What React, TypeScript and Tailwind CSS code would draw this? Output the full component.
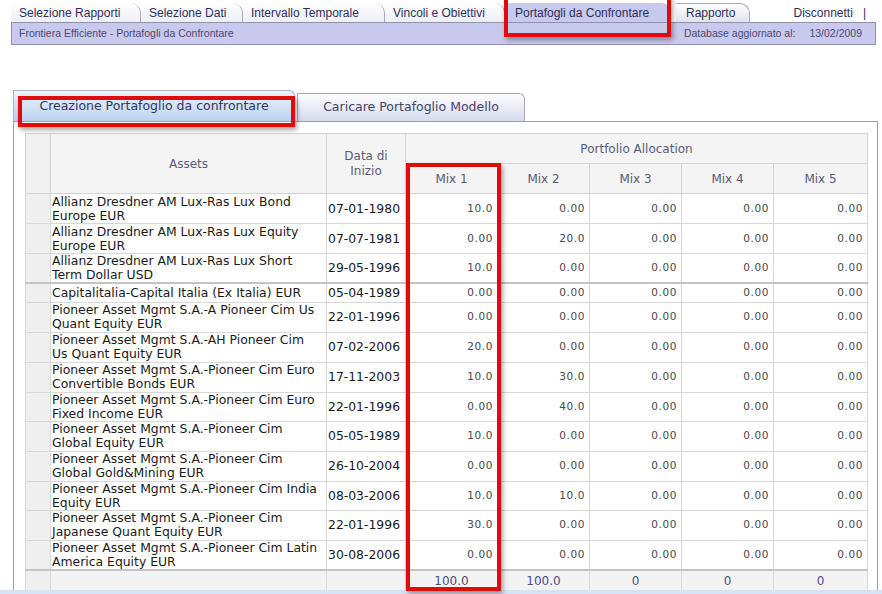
import React from "react";

const navTabs = [
  { label: "Selezione Rapporti", w: "w-[130px]" },
  { label: "Selezione Dati", w: "w-[102px]" },
  { label: "Intervallo Temporale", w: "w-[142px]" },
  { label: "Vincoli e Obiettivi", w: "w-[120px]" },
];

type Row = {
  lines: string[];
  date: string;
  mix: string[];
  h: string;
  sep?: boolean;
};

const rows: Row[] = [
  { lines: ["Allianz Dresdner AM Lux-Ras Lux Bond", "Europe EUR"], date: "07-01-1980", mix: ["10.0", "0.00", "0.00", "0.00", "0.00"], h: "h-[30px]" },
  { lines: ["Allianz Dresdner AM Lux-Ras Lux Equity", "Europe EUR"], date: "07-07-1981", mix: ["0.00", "20.0", "0.00", "0.00", "0.00"], h: "h-[30px]" },
  { lines: ["Allianz Dresdner AM Lux-Ras Lux Short", "Term Dollar USD"], date: "29-05-1996", mix: ["10.0", "0.00", "0.00", "0.00", "0.00"], h: "h-[29px]", sep: true },
  { lines: ["Capitalitalia-Capital Italia (Ex Italia) EUR"], date: "05-04-1989", mix: ["0.00", "0.00", "0.00", "0.00", "0.00"], h: "h-[19px]" },
  { lines: ["Pioneer Asset Mgmt S.A.-A Pioneer Cim Us", "Quant Equity EUR"], date: "22-01-1996", mix: ["0.00", "0.00", "0.00", "0.00", "0.00"], h: "h-[30px]" },
  { lines: ["Pioneer Asset Mgmt S.A.-AH Pioneer Cim", "Us Quant Equity EUR"], date: "07-02-2006", mix: ["20.0", "0.00", "0.00", "0.00", "0.00"], h: "h-[30px]" },
  { lines: ["Pioneer Asset Mgmt S.A.-Pioneer Cim Euro", "Convertible Bonds EUR"], date: "17-11-2003", mix: ["10.0", "30.0", "0.00", "0.00", "0.00"], h: "h-[30px]" },
  { lines: ["Pioneer Asset Mgmt S.A.-Pioneer Cim Euro", "Fixed Income EUR"], date: "22-01-1996", mix: ["0.00", "40.0", "0.00", "0.00", "0.00"], h: "h-[29px]" },
  { lines: ["Pioneer Asset Mgmt S.A.-Pioneer Cim", "Global Equity EUR"], date: "05-05-1989", mix: ["10.0", "0.00", "0.00", "0.00", "0.00"], h: "h-[30px]" },
  { lines: ["Pioneer Asset Mgmt S.A.-Pioneer Cim", "Global Gold&Mining EUR"], date: "26-10-2004", mix: ["0.00", "0.00", "0.00", "0.00", "0.00"], h: "h-[30px]" },
  { lines: ["Pioneer Asset Mgmt S.A.-Pioneer Cim India", "Equity EUR"], date: "08-03-2006", mix: ["10.0", "10.0", "0.00", "0.00", "0.00"], h: "h-[29px]" },
  { lines: ["Pioneer Asset Mgmt S.A.-Pioneer Cim", "Japanese Quant Equity EUR"], date: "22-01-1996", mix: ["30.0", "0.00", "0.00", "0.00", "0.00"], h: "h-[30px]" },
  { lines: ["Pioneer Asset Mgmt S.A.-Pioneer Cim Latin", "America Equity EUR"], date: "30-08-2006", mix: ["0.00", "0.00", "0.00", "0.00", "0.00"], h: "h-[29px]", sep: true },
];

const totals = ["100.0", "100.0", "0", "0", "0"];

function RedBox({ className }: { className: string }) {
  return (
    <div
      className={`pointer-events-none absolute border-[4px] border-[#e00c0c] shadow-[2px_3px_5px_rgba(0,0,0,0.35)] ${className}`}
    />
  );
}

export default function App() {
  return (
    <div className="relative h-[594px] w-[882px] overflow-hidden bg-white font-['Liberation_Sans',Arial,sans-serif]">
      {/* top navigation */}
      <div className="pl-[11px] pt-[3px]">
        <div className="flex h-[19px] items-stretch text-[12px] text-[#2e2e5a]">
          {navTabs.map((t) => (
            <div
              key={t.label}
              className={`${t.w} flex items-center rounded-tr-[10px] border-r border-[#a8a8c0] bg-gradient-to-b from-white to-[#eeeef6] pl-[8px]`}
            >
              {t.label}
            </div>
          ))}
          <div className="flex w-[165px] items-center rounded-tr-[8px] bg-[#c9c9ee] pl-[10px]">
            Portafogli da Confrontare
          </div>
          <div className="ml-[6px] flex w-[74px] items-center rounded-tr-[10px] border-r border-t border-[#a8a8c0] bg-gradient-to-b from-white to-[#e2e2f0] pl-[10px]">
            Rapporto
          </div>
          <div className="ml-auto flex items-center pr-[16px] text-[12px]">
            Disconnetti <span className="ml-[10px]">|</span>
          </div>
        </div>
        <div className="mr-[6px] flex h-[23px] items-center border border-[#9090b0] bg-[#c9c9ee] pl-[7px] pr-[13px] text-[10.5px] text-[#4a4a72]">
          <span>Frontiera Efficiente - Portafogli da Confrontare</span>
          <span className="ml-auto">Database aggiornato al:</span>
          <span className="ml-[14px]">13/02/2009</span>
        </div>
      </div>

      {/* content */}
      <div className="mt-[45px] ml-[13px] w-[865px] font-['DejaVu_Sans',Verdana,sans-serif]">
        <div className="flex h-[31px] items-end">
          <div className="flex h-[31px] w-[282px] items-center justify-center rounded-tr-[6px] border border-b-0 border-[#a8b4c8] bg-gradient-to-b from-[#eef4fc] to-[#bcd2f0] text-[12.5px] text-[#34345a]">
            Creazione Portafoglio da confrontare
          </div>
          <div className="ml-[2px] flex h-[28px] w-[228px] items-center justify-center rounded-tr-[6px] border border-b-0 border-[#a8a8c0] bg-gradient-to-b from-white to-[#d6daf0] text-[12.5px] text-[#44446a]">
            Caricare Portafoglio Modello
          </div>
        </div>
        <div className="h-[480px] border border-[#a0a0a0] pl-[11px] pr-[9px] pt-[11px]">
          <table className="w-[842px] table-fixed border-collapse border border-[#c8c8c8]">
            <colgroup>
              <col className="w-[25px]" />
              <col className="w-[276px]" />
              <col className="w-[79px]" />
              <col className="w-[92px]" />
              <col className="w-[92px]" />
              <col className="w-[92px]" />
              <col className="w-[92px]" />
              <col className="w-[94px]" />
            </colgroup>
            <thead className="text-[12px] font-normal text-[#5a5a7e]">
              <tr className="h-[30px]">
                <th rowSpan={2} className="border border-[#d4d4d4] bg-[#f0f0f0]" />
                <th rowSpan={2} className="border border-[#d4d4d4] bg-[#f4f4f4] font-normal">
                  Assets
                </th>
                <th rowSpan={2} className="border border-[#d4d4d4] bg-[#f4f4f4] font-normal leading-[15px]">
                  Data di
                  <br />
                  Inizio
                </th>
                <th colSpan={5} className="border border-[#d4d4d4] bg-[#f4f4f4] font-normal">
                  Portfolio Allocation
                </th>
              </tr>
              <tr className="h-[30px]">
                {["Mix 1", "Mix 2", "Mix 3", "Mix 4", "Mix 5"].map((m) => (
                  <th key={m} className="border border-[#d4d4d4] bg-[#f4f4f4] font-normal">
                    {m}
                  </th>
                ))}
              </tr>
            </thead>
            <tbody>
              {rows.map((r, i) => (
                <tr
                  key={i}
                  className={`${r.h} ${r.sep ? "border-b-2 border-b-[#c4c4c4]" : ""}`}
                >
                  <td className="border border-[#d8d8d8] bg-[#efefef]" />
                  <td className="border border-[#d8d8d8] px-[1px] text-[12.4px] leading-[14px] text-[#1a1a1a]">
                    {r.lines.map((l) => (
                      <div key={l} className="whitespace-nowrap">
                        {l}
                      </div>
                    ))}
                  </td>
                  <td className="border border-[#d8d8d8] px-[1px] text-[12.4px] leading-[14px] text-[#1a1a1a]">
                    {r.date}
                  </td>
                  {r.mix.map((v, j) => (
                    <td
                      key={j}
                      className="border border-[#d8d8d8] pr-[4px] text-right text-[10.5px] tracking-[0.6px] text-[#484848]"
                    >
                      {v}
                    </td>
                  ))}
                </tr>
              ))}
              <tr className="h-[22px] bg-[#f3f3f3]">
                <td className="border border-[#d8d8d8] bg-[#efefef]" />
                <td className="border border-[#d8d8d8]" />
                <td className="border border-[#d8d8d8]" />
                {totals.map((v, j) => (
                  <td
                    key={j}
                    className="border border-[#d8d8d8] text-center text-[12px] text-[#4c4c86]"
                  >
                    {v}
                  </td>
                ))}
              </tr>
            </tbody>
          </table>
        </div>
      </div>

      {/* bottom status strip */}
      <div className="absolute bottom-0 left-0 h-[4px] w-full bg-[#d6e3f6]" />

      {/* red highlight annotations */}
      <RedBox className="left-[504px] top-[-4px] h-[41px] w-[167px]" />
      <RedBox className="left-[18px] top-[96px] h-[31px] w-[277px]" />
      <RedBox className="left-[406px] top-[163px] h-[428px] w-[95px]" />
    </div>
  );
}
